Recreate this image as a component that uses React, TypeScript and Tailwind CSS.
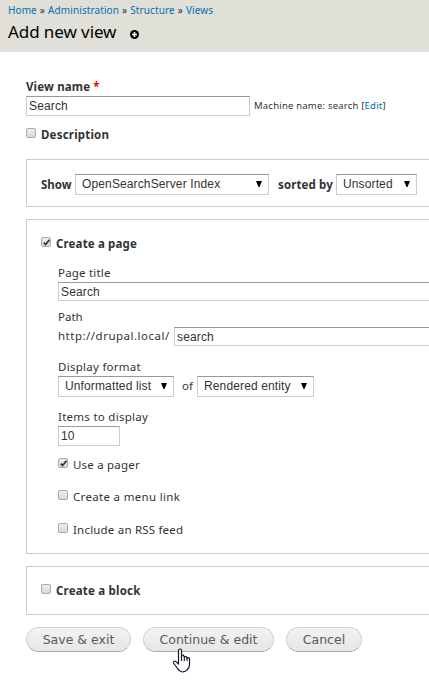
import type { ReactNode } from 'react';

function Label({ children, className = '' }: { children: ReactNode; className?: string }) {
  return <span className={`block shrink-0 whitespace-pre text-[11.5px] leading-[16px] ${className}`}>{children}</span>;
}

function Checkbox({ checked = false }: { checked?: boolean }) {
  return (
    <span className="flex h-[10px] w-[10px] shrink-0 items-center justify-center rounded-[2px] border border-[#aaa] bg-linear-to-b from-[#eee] to-[#d9d9d9]">
      {checked && (
        <svg className="h-[7px] w-[7px] shrink-0" viewBox="0 0 8 8" fill="none" stroke="#333" strokeWidth="1.9">
          <path d="M0.8 4.2 L3 6.3 L7.3 1" />
        </svg>
      )}
    </span>
  );
}

function Field({ value, className = '' }: { value: string; className?: string }) {
  return (
    <div className={`flex shrink-0 items-center border border-[#ccc] border-t-[#999] bg-white pl-[2px] font-['Liberation_Sans',sans-serif] text-[12px] leading-[14px] tracking-[0.15px] ${className}`}>
      {value}
    </div>
  );
}

function Select({ value, className = '' }: { value: string; className?: string }) {
  return (
    <div className={`flex h-[21px] shrink-0 items-center justify-between border border-[#ccc] border-t-[#999] bg-white pr-[6px] pb-px pl-[6px] font-['Liberation_Sans',sans-serif] text-[12px] leading-[14px] tracking-[0.13px] whitespace-nowrap ${className}`}>
      <span>{value}</span>
      <svg className="h-[6px] w-[6px]" viewBox="0 0 6 6">
        <path d="M0 0H6L3.5 6H2.5Z" fill="#000" />
      </svg>
    </div>
  );
}

function Button({ children, className }: { children: ReactNode; className: string }) {
  return (
    <button className={`h-[25px] rounded-full border border-[#d0d0d0] border-b-[#aaa] bg-linear-to-b from-[#f3f3f3] to-[#e6e6e6] pt-px font-['DejaVu_Sans',sans-serif] text-[12.5px] leading-[22px] whitespace-nowrap text-[#5a5a5a] ${className}`}>
      {children}
    </button>
  );
}

export default function App() {
  return (
    <div className="h-[682px] w-[429px] overflow-hidden bg-white font-['Noto_Sans','Open_Sans',sans-serif] text-[#333]">
      <header className="h-[52px] bg-[#e0dfd8] pl-[8px]">
        <nav className="flex h-[21px] items-center gap-[3px] text-[10px] tracking-[0.1px] text-[#0071b3]">
          <span>Home</span><span className="text-[#333]">»</span>
          <span>Administration</span><span className="text-[#333]">»</span>
          <span>Structure</span><span className="text-[#333]">»</span>
          <span>Views</span>
        </nav>
        <div className="flex h-[22px] items-center gap-[14px]">
          <h1 className="text-[17px] leading-[22px] tracking-[-0.08px] text-black">Add new view</h1>
          <svg className="mt-[4px] h-[9px] w-[9px]" viewBox="0 0 9 9">
            <circle cx="4.5" cy="4.5" r="4.5" fill="#000" />
            <path d="M4.5 2V7M2 4.5H7" stroke="#fff" strokeWidth="1.6" />
          </svg>
        </div>
      </header>

      <main className="pl-[26px]">
        <Label className="pt-[27px] font-bold tracking-[0.15px]">View name <span className="text-[#f00]">*</span></Label>
        <div className="mt-px flex items-center gap-[4px]">
          <Field value="Search" className="h-[20px] w-[224px]" />
          <span className="text-[9.5px] tracking-[0.21px] whitespace-nowrap">Machine name: search [<span className="text-[#0071b3]">Edit</span>]</span>
        </div>
        <div className="mt-[11px] flex h-[16px] items-start gap-[5px]">
          <span className="pt-px"><Checkbox /></span>
          <Label className="font-bold tracking-[0.2px]">Description</Label>
        </div>

        <section className="mt-[16px] flex h-[48px] w-[430px] items-center border border-[#ccc] pt-[3px] pl-[14px]">
          <Label className="w-[34px] font-bold">Show</Label>
          <Select value="OpenSearchServer Index" className="w-[194px]" />
          <Label className="ml-[9px] w-[58px] font-bold tracking-[0.12px]">sorted by</Label>
          <Select value="Unsorted" className="w-[81px]" />
        </section>

        <section className="mt-[12px] h-[335px] w-[430px] border border-[#ccc] pt-[16px] pl-[14px]">
          <div className="flex h-[16px] items-start gap-[5px]">
            <span className="pt-px"><Checkbox checked /></span>
            <Label className="font-bold tracking-[0.15px]">Create a page</Label>
          </div>
          <div className="pl-[17px]">
            <Label className="mt-[13px] tracking-[0.2px]">Page title</Label>
            <Field value="Search" className="mt-px h-[19px] w-[400px]" />
            <Label className="mt-[8px]">Path</Label>
            <div className="mt-[2px] flex items-center">
              <Label className="-mt-px w-[116px] tracking-[0.5px]">http://drupal.local/</Label>
              <Field value="search" className="h-[19px] w-[284px]" />
            </div>
            <Label className="mt-[13px] tracking-[0.27px]">Display format</Label>
            <div className="mt-px flex items-center">
              <Select value="Unformatted list" className="w-[116px]" />
              <Label className="-mt-px ml-[8px] w-[15px]">of</Label>
              <Select value="Rendered entity" className="w-[117px]" />
            </div>
            <Label className="mt-[12px] tracking-[0.27px]">Items to display</Label>
            <Field value="10" className="mt-px h-[20px] w-[62px]" />
            <div className="mt-[11px] flex h-[16px] items-start gap-[5px]">
              <span className="pt-px"><Checkbox checked /></span>
              <Label className="tracking-[0.2px]">Use a pager</Label>
            </div>
            <div className="mt-[16px] flex h-[16px] items-start gap-[5px]">
              <span className="pt-px"><Checkbox /></span>
              <Label className="tracking-[0.32px]">Create a menu link</Label>
            </div>
            <div className="mt-[17px] flex h-[16px] items-start gap-[5px]">
              <span className="pt-px"><Checkbox /></span>
              <Label className="tracking-[0.2px]">Include an RSS feed</Label>
            </div>
          </div>
        </section>

        <section className="mt-[12px] h-[49px] w-[430px] border border-[#ccc] pt-[16px] pl-[14px]">
          <div className="flex h-[16px] items-start gap-[5px]">
            <span className="pt-px"><Checkbox /></span>
            <Label className="font-bold tracking-[0.2px]">Create a block</Label>
          </div>
        </section>

        <div className="relative mt-[12px] flex gap-[12px]">
          <Button className="w-[105px]">Save &amp; exit</Button>
          <Button className="w-[131px]">Continue &amp; edit</Button>
          <Button className="w-[76px]">Cancel</Button>
          <svg className="absolute top-[21px] left-[146px] h-[25px] w-[19px]" viewBox="0 0 19 25">
            <path d="M6.5 14V2.5Q6.5 1 8 1T9.5 2.5V9 7.5Q11.8 6.5 12.3 9 14.5 7.8 15 10 17.5 9 17.5 11.5V17Q17.5 20 15 22 13.5 24 10 24 7 23.5 5.5 20.5L1.5 15Q1 13.5 2.5 13 4 13 6.5 16.2Z" fill="#fff" stroke="#151525" strokeWidth="1.2" strokeLinejoin="round" />
            <path d="M9.5 8V13M12.3 9V13M15 10V13" stroke="#151525" strokeWidth="1.1" />
          </svg>
        </div>
      </main>
    </div>
  );
}
